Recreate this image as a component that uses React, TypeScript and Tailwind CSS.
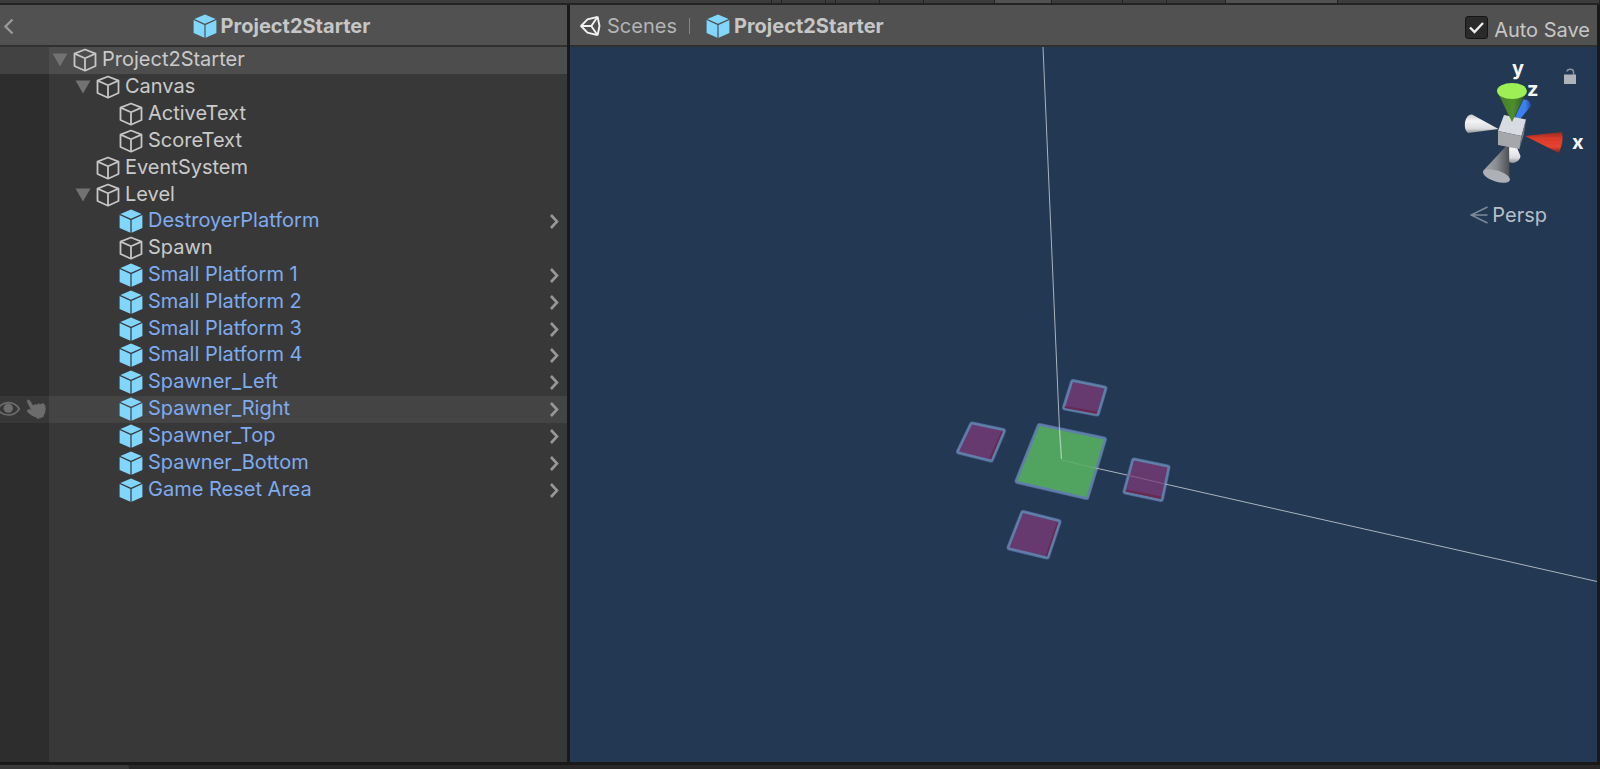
import React from "react";

type Item = {
  name: string;
  depth: number;
  prefab?: boolean;
  open?: boolean;
  root?: boolean;
  hovered?: boolean;
};

const items: Item[] = [
  { name: "Project2Starter", depth: 0, open: true, root: true },
  { name: "Canvas", depth: 1, open: true },
  { name: "ActiveText", depth: 2 },
  { name: "ScoreText", depth: 2 },
  { name: "EventSystem", depth: 1 },
  { name: "Level", depth: 1, open: true },
  { name: "DestroyerPlatform", depth: 2, prefab: true },
  { name: "Spawn", depth: 2 },
  { name: "Small Platform 1", depth: 2, prefab: true },
  { name: "Small Platform 2", depth: 2, prefab: true },
  { name: "Small Platform 3", depth: 2, prefab: true },
  { name: "Small Platform 4", depth: 2, prefab: true },
  { name: "Spawner_Left", depth: 2, prefab: true },
  { name: "Spawner_Right", depth: 2, prefab: true, hovered: true },
  { name: "Spawner_Top", depth: 2, prefab: true },
  { name: "Spawner_Bottom", depth: 2, prefab: true },
  { name: "Game Reset Area", depth: 2, prefab: true },
];

const indents = ["pl-0", "pl-[23px]", "pl-[46px]"];

function CubeOutline() {
  return (
    <svg viewBox="0 0 24 24" className="size-6 shrink-0" fill="none" stroke="#c6c6c6" strokeWidth="1.8" strokeLinejoin="round" aria-hidden="true">
      <path d="M12 1.5 22.5 5.6V18L12 22.7 1.5 18V5.6Z" />
      <path d="M1.5 5.6 12 10.2 22.5 5.6M12 10.2V22.7" />
    </svg>
  );
}

function CubeSolid() {
  return (
    <svg viewBox="0 0 24 24" className="size-6 shrink-0" fill="#80d6fd" aria-hidden="true">
      <path d="M12 .4 22.6 4.9 12 9.7 1.4 4.9Z" />
      <path d="M.6 6.1 11.4 11V23.8L.6 18.9Z" />
      <path d="M23.4 6.1 12.6 11V23.8L23.4 18.9Z" />
    </svg>
  );
}

function Eye() {
  return (
    <svg viewBox="0 0 20 16" className="h-4 w-5 shrink-0" fill="none" aria-hidden="true">
      <path d="M-2.500 8C3 -.5 14 -.5 19.300 8 14 16 3 16-2.500 8Z" stroke="#6c6c6c" strokeWidth="1.700" />
      <circle cx="8.300" cy="7.200" r="4.700" fill="#6c6c6c" />
    </svg>
  );
}

function Hand() {
  return (
    <svg viewBox="0 0 20 20" className="size-5 shrink-0" fill="#6c6c6c" stroke="#6c6c6c" strokeWidth="1" strokeLinejoin="round" aria-hidden="true">
      <path d="M1.500 1.500C2.300.5 3.300 1 3.800 2L7 7.300C7.700 5.800 9.500 5.200 10.800 6.200 11.800 4.700 13.500 4.500 14.600 5.700 16 4.300 17.800 4.600 18.600 6.200 19.300 8.500 19.300 11.500 18.500 14L17.300 16.200V17.500L11.500 19.500 9.800 17.700C7 17.300 4 15 1.500 12.700 1 11 2.500 10.300 4 10.800L6 11.700 1.800 3.500C1.400 2.700 1.200 2 1.500 1.500Z" />
    </svg>
  );
}

function UnityLogo() {
  return (
    <svg viewBox="0 0 22 22" className="h-[22px] w-[22px] shrink-0" fill="none" stroke="#f2f2f2" strokeWidth="1.900" aria-hidden="true">
      <path d="M2 11 8.500 4.400 18.600 1.800M18.600 1.800 20.500 11 18.600 20.200M18.600 20.200 8.500 17.600 2 11" />
      <path d="M1.500 11H12.300L18.400 2M12.300 11 18.400 20" />
    </svg>
  );
}

function Row({ item }: { item: Item }) {
  const gutter = item.root ? "bg-[#424242]" : item.hovered ? "bg-[#373737]" : "";
  const body = item.root ? "bg-[#4d4d4d]" : item.hovered ? "bg-[#444444]" : "";
  return (
    <li className="flex min-h-0">
      <div className={`flex w-[49px] shrink-0 items-center gap-[6px] ${gutter}`}>
        {item.hovered && (
          <>
            <button aria-label="Toggle visibility"><Eye /></button>
            <button aria-label="Toggle picking"><Hand /></button>
          </>
        )}
      </div>
      <div className={`flex min-w-0 grow items-center pr-[5px] ${body}`}>
        <div className={`flex grow items-center ${indents[item.depth]}`}>
          <span className="flex w-6 shrink-0 justify-start pl-[3px]">
            {item.open && (
              <button aria-label={`Collapse ${item.name}`}>
                <svg viewBox="0 0 16 14" className="h-[14px] w-4" fill="#727272" aria-hidden="true"><path d="M.5.500H15.500L8 13.500Z" /></svg>
              </button>
            )}
          </span>
          {item.prefab ? <CubeSolid /> : <CubeOutline />}
          <span className={`pb-[2px] pl-[5px] whitespace-nowrap ${item.prefab ? "text-[#7fabef]" : "text-[#cacaca]"}`}>{item.name}</span>
        </div>
        {item.prefab && (
          <button aria-label={`Open ${item.name}`}>
            <svg viewBox="0 0 16 18" className="h-[18px] w-4" fill="none" stroke="#989898" strokeWidth="2.600" aria-hidden="true"><path d="M5 3 11 9.500 5 16" /></svg>
          </button>
        )}
      </div>
    </li>
  );
}

const toolbar = [
  { grow: 771, lit: false }, { grow: 9, lit: false }, { grow: 43, lit: false }, { grow: 9, lit: false },
  { grow: 43, lit: false }, { grow: 43, lit: false }, { grow: 70, lit: false }, { grow: 56, lit: true },
  { grow: 70, lit: false }, { grow: 43, lit: false }, { grow: 58, lit: false }, { grow: 111, lit: true }, { grow: 261, lit: false },
];

const tiles = [
  { d: "M1073 382 1104.500 388.500 1097 413.500 1065 407.500Z", edge: "M1065 406 1097 411.500 1096.500 414 1064.500 408Z" },
  { d: "M972 424.500 1003 431 991 459.500 959 451.500Z", edge: "M1001 432 1003 431 991 459.500 989.500 458Z" },
  { d: "M1134 460.500 1167.500 467.500 1161 499 1125.500 491.500Z", edge: "M1126 489.500 1161.500 496.500 1161 499 1125.500 491.500Z" },
  { d: "M1023 513 1058.500 522 1047 556.500 1009.500 547.500Z", edge: "M1057 522 1058.500 522 1047 556.500 1045.500 556Z" },
];

function Scene() {
  return (
    <svg viewBox="570 47 1027 715" preserveAspectRatio="xMidYMid slice" className="h-full w-full" role="img" aria-label="Platforms in the scene">
      {tiles.map((t) => (
        <g key={t.d}>
          <path d={t.d} stroke="#4c6990" strokeWidth="6" strokeLinejoin="round" />
          <path d={t.d} stroke="#607eaa" strokeWidth="4.500" strokeLinejoin="round" />
          <path d={t.d} fill="#66396f" />
          <path d={t.edge} fill="#672a4e" />
        </g>
      ))}
      <path d="M1039.500 426 1104 439.500 1086.500 497 1017.500 481Z" stroke="#4c6990" strokeWidth="6" strokeLinejoin="round" />
      <path d="M1039.500 426 1104 439.500 1086.500 497 1017.500 481Z" stroke="#607eaa" strokeWidth="4.500" strokeLinejoin="round" />
      <path d="M1039.500 426 1104 439.500 1086.500 497 1017.500 481Z" fill="#51a460" />
      <g fill="none" stroke="#a9b4be">
        <path d="M1043 47 1059.500 430" />
        <path d="M1095.500 468 1127 475M1165 484 1597 581.500" />
        <path d="M1059.500 430 1061.500 459" stroke="#a8cdac" strokeWidth="1.300" />
        <path d="M1061.500 460 1095.500 468" stroke="#68ac72" />
        <path d="M1127 475 1165 484" stroke="#82608a" />
      </g>
    </svg>
  );
}

function Gizmo() {
  return (
    <svg viewBox="1460 50 130 140" className="h-[140px] w-[130px]" role="img" aria-label="Scene orientation">
      <defs>
        <linearGradient id="white" x1="0" y1="0" x2="0" y2="1"><stop stopColor="#c8cacc" /><stop offset=".35" stopColor="#f4f4f5" /><stop offset=".75" stopColor="#dddee0" /><stop offset="1" stopColor="#8f9296" /></linearGradient>
        <linearGradient id="red" x1="0" y1="0" x2="0" y2="1"><stop stopColor="#8e2a20" /><stop offset=".3" stopColor="#d93c2a" /><stop offset=".7" stopColor="#e8432f" /><stop offset="1" stopColor="#7b251c" /></linearGradient>
        <linearGradient id="green"><stop stopColor="#447c27" /><stop offset=".55" stopColor="#4e8d2c" /><stop offset="1" stopColor="#2c5518" /></linearGradient>
        <linearGradient id="gray"><stop stopColor="#a8aaad" /><stop offset=".5" stopColor="#898c91" /><stop offset="1" stopColor="#4c4f54" /></linearGradient>
        <linearGradient id="blue"><stop stopColor="#3d80f2" /><stop offset=".65" stopColor="#3b7ff0" /><stop offset="1" stopColor="#214e9c" /></linearGradient>
      </defs>
      <path d="M1515 117 1523.500 99.500Q1530 99 1531 106L1520 119Z" fill="url(#blue)" />
      <path d="M1498.500 129 1472 114.500Q1467 114 1465 122 1464 130 1468 133Z" fill="url(#white)" />
      <path d="M1510 141 1507.500 161Q1512 164.500 1516 162 1520 160 1520.500 156L1515 143Z" fill="url(#white)" />
      <path d="M1509 143 1483 171Q1484 177 1495 181 1506 184 1509.500 180Z" fill="url(#gray)" />
      <ellipse cx="1496.500" cy="176" rx="14" ry="5.500" transform="rotate(18 1496.500 176)" fill="#adb0b4" />
      <path d="M1504 115 1526 119.500 1521.500 136 1498 131Z" fill="#d9dbe2" />
      <path d="M1498 131 1521.500 136 1519.500 149 1498 145Z" fill="#a5a7aa" />
      <path d="M1526 119.500 1521.500 136 1519.500 149 1524 134Z" fill="#76787d" />
      <path d="M1497.500 92 1512 122 1526.500 92Z" fill="url(#green)" />
      <ellipse cx="1512" cy="91" rx="15" ry="8" fill="#9eee55" />
      <path d="M1525 136 1562 132Q1564 141 1559 153Z" fill="url(#red)" />
      <g fill="#f5f6f7" fontFamily="Inter, sans-serif" fontSize="20" fontWeight="700">
        <text x="1512" y="75">y</text>
        <text x="1527" y="96">z</text>
        <text x="1572" y="149">x</text>
      </g>
    </svg>
  );
}

export default function App() {
  return (
    <div className="flex min-h-screen flex-col bg-[#191919] font-['Inter',sans-serif] text-[20px] leading-6 text-[#c6c6c6]">
      <div className="flex h-1 shrink-0 bg-[#232323] pb-px">
        {toolbar.map((t, i) => (
          <div key={i} className={`basis-0 border-r border-[#232323] ${t.lit ? "bg-[#515151]" : "bg-[#3c3c3c]"}`} style={{ flexGrow: t.grow }} />
        ))}
      </div>
      <div className="flex grow gap-[3px] border-t border-[#232323] pr-[3px]">
        <aside className="flex w-[567px] shrink-0 flex-col">
          <header className="flex h-[42px] shrink-0 items-center border-b-2 border-[#303030] bg-[#515151] pt-px">
            <button aria-label="Back" className="pl-[2px]">
              <svg viewBox="0 0 14 18" className="h-[18px] w-[14px]" fill="none" stroke="#999" strokeWidth="2.400" aria-hidden="true"><path d="M10.500 2.500 3.500 9.500 10.500 16.500" /></svg>
            </button>
            <h1 className="flex grow items-center justify-center gap-1 pr-5 font-bold">
              <CubeSolid />
              Project2Starter
            </h1>
          </header>
          <div className="grow bg-[linear-gradient(to_right,#2d2d2d_49px,#383838_49px)]">
            <ul className="grid h-[456px] auto-rows-fr">
              {items.map((item) => <Row key={item.name} item={item} />)}
            </ul>
          </div>
        </aside>
        <main className="flex min-w-0 grow flex-col">
          <header className="flex h-[42px] shrink-0 items-center border-b-2 border-[#303030] bg-[#515151] pt-px pr-[7px] pl-[9px]">
            <nav className="flex items-center" aria-label="Breadcrumb">
              <a href="#scenes" className="flex items-center gap-[6px] text-[#b4b4b4]"><UnityLogo />Scenes</a>
              <span className="mx-3 h-4 w-px bg-[#858585]" />
              <a href="#project" className="ml-1 flex items-center gap-1 font-bold"><CubeSolid />Project2Starter</a>
            </nav>
            <label className="ml-auto flex items-center gap-[6px] pt-1">
              <span className="grid size-[23px]">
                <input type="checkbox" defaultChecked className="peer col-start-1 row-start-1 size-[23px] appearance-none rounded-[3px] border border-[#161616] bg-[#2a2a2a]" />
                <svg viewBox="0 0 23 23" className="pointer-events-none invisible col-start-1 row-start-1 size-[23px] peer-checked:visible" fill="none" stroke="#ededed" strokeWidth="2.400" aria-hidden="true"><path d="M5 11.500 9.500 16 18 7" /></svg>
              </span>
              <span className="pt-1">Auto Save</span>
            </label>
          </header>
          <div className="relative grow bg-[#233852]">
            <div className="absolute inset-0"><Scene /></div>
            <div className="absolute top-[3px] right-[7px]"><Gizmo /></div>
            <button aria-label="Lock rotation" className="absolute top-[21px] right-5">
              <svg viewBox="0 0 14 17" className="h-[17px] w-[14px]" fill="none" aria-hidden="true">
                <path d="M1 6.500H13V16H1Z" fill="#b0b4b9" />
                <path d="M4 3.500C4.500.5 10 .5 10.500 3.500V7" stroke="#8a95a3" strokeWidth="1.500" />
              </svg>
            </button>
            <button className="absolute top-[156px] right-[50px] flex items-center gap-1 text-[#b9bfc6]">
              <svg viewBox="0 0 18 18" className="size-[18px]" fill="none" stroke="#7e8b9a" strokeWidth="1.400" aria-hidden="true"><path d="M17.500 1 1 9 17.500 17M1 9H17.500" /></svg>
              Persp
            </button>
          </div>
        </main>
      </div>
      <footer className="h-[7px] shrink-0 pt-[3px]">
        <div className="h-1 bg-[#282828]">
          <div className="h-1 w-[129px] rounded-tr-[3px] bg-[#3a3a3a]" />
        </div>
      </footer>
    </div>
  );
}
